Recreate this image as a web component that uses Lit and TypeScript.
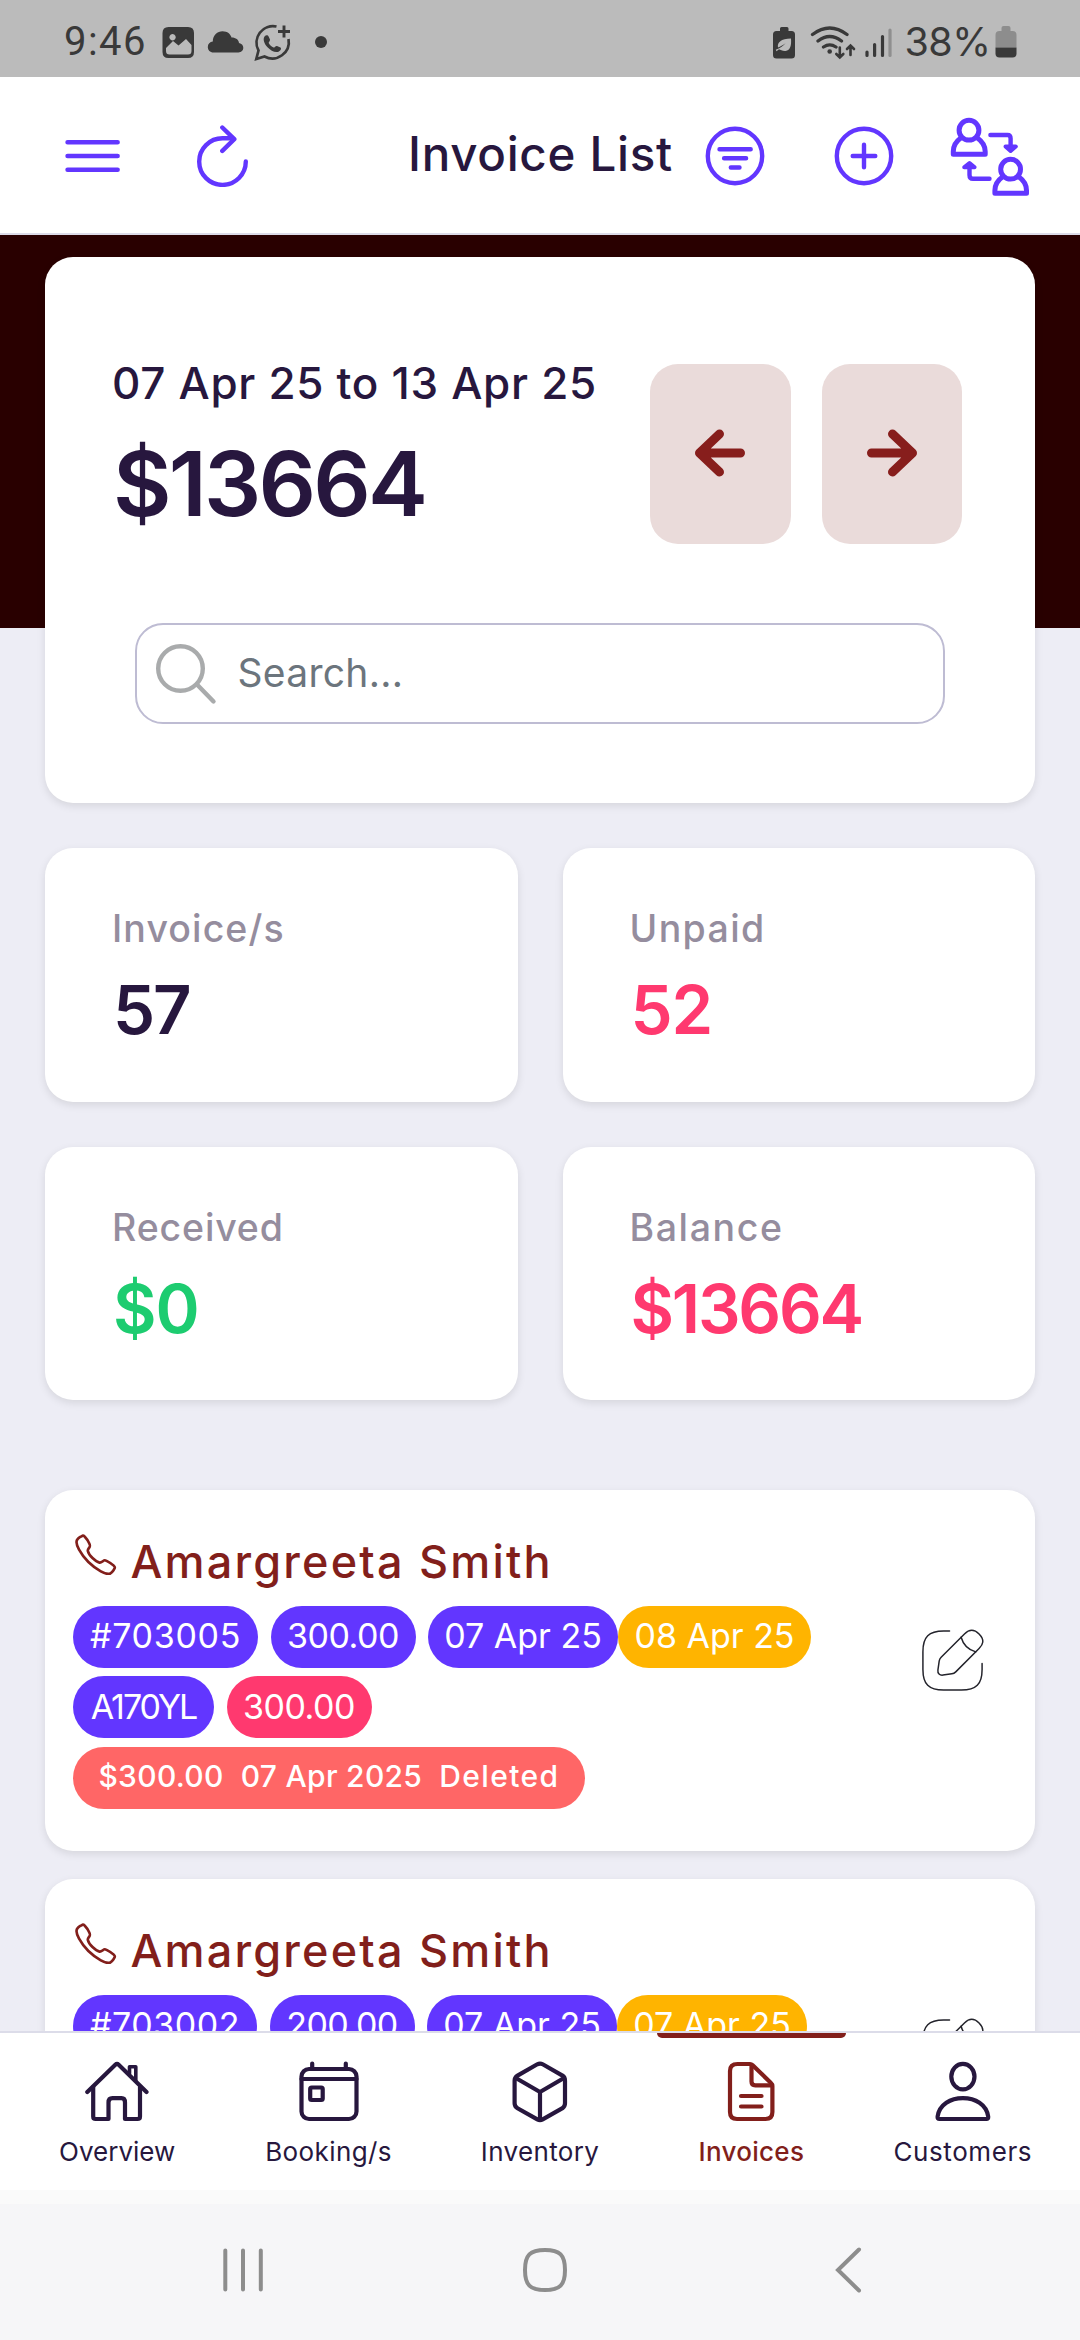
import { LitElement, html, css, svg, TemplateResult } from "lit";
import { customElement, property } from "lit/decorators.js";
import { classMap } from "lit/directives/class-map.js";
import { styleMap } from "lit/directives/style-map.js";

/* ---------- data ---------- */

interface Pill {
  text: string;
  tone: "primary" | "warning" | "danger";
  width: number;
  spacing: number;
  joined?: boolean;
}

interface Invoice {
  customer: string;
  rows: Pill[][];
  removed?: string[];
}

interface Stat {
  label: string;
  value: string;
  tone: "dark" | "danger" | "success";
  labelSpacing: number;
  valueSpacing: number;
}

const STATS: Stat[] = [
  { label: "Invoice/s", value: "57", tone: "dark", labelSpacing: 1.1, valueSpacing: -2.1 },
  { label: "Unpaid", value: "52", tone: "danger", labelSpacing: 1.4, valueSpacing: -1.1 },
  { label: "Received", value: "$0", tone: "success", labelSpacing: 0.85, valueSpacing: -1.1 },
  { label: "Balance", value: "$13664", tone: "danger", labelSpacing: 1.6, valueSpacing: -2.25 },
];

const INVOICES: Invoice[] = [
  {
    customer: "Amargreeta Smith",
    rows: [
      [
        { text: "#703005", tone: "primary", width: 185, spacing: 0.7 },
        { text: "300.00", tone: "primary", width: 145, spacing: -0.5 },
        { text: "07 Apr 25", tone: "primary", width: 190, spacing: 0 },
        { text: "08 Apr 25", tone: "warning", width: 193, spacing: 0, joined: true },
      ],
      [
        { text: "A170YL", tone: "primary", width: 141, spacing: -2 },
        { text: "300.00", tone: "danger", width: 145, spacing: -0.5 },
      ],
    ],
    removed: ["$300.00", "07 Apr 2025", "Deleted"],
  },
  {
    customer: "Amargreeta Smith",
    rows: [
      [
        { text: "#703002", tone: "primary", width: 184, spacing: 0.5 },
        { text: "200.00", tone: "primary", width: 145, spacing: -0.5 },
        { text: "07 Apr 25", tone: "primary", width: 190, spacing: 0 },
        { text: "07 Apr 25", tone: "warning", width: 190, spacing: 0, joined: true },
      ],
    ],
  },
];

/* ---------- icons ---------- */

const menuIcon = html`<svg width="56" height="40" viewBox="65 135.5 56 40" fill="none" stroke="#6236ff" stroke-width="4.6" stroke-linecap="round">
  <path d="M67.6 141.7H117.6M67.6 155.5H117.6M67.6 169.2H117.6" />
</svg>`;

const refreshIcon = html`<svg width="52" height="62" viewBox="197 124.5 52 62" fill="none" stroke="#6236ff" stroke-width="4.4" stroke-linecap="round" stroke-linejoin="round">
  <path d="M245.8 161A23.3 23.3 0 1 1 222.5 137.8H232" />
  <path d="M222.3 127L234.3 138.7L222.3 150.4" />
</svg>`;

const filterIcon = html`<svg width="60" height="60" viewBox="704.5 125.5 60 60" fill="none" stroke="#6236ff" stroke-width="4.4" stroke-linecap="round">
  <circle cx="734.5" cy="155.5" r="27.2" />
  <path d="M719 148.7H750.2M723.6 157.8H745.6M730.3 167H739" />
</svg>`;

const plusIcon = html`<svg width="60" height="60" viewBox="833.7 125.5 60 60" fill="none" stroke="#6236ff" stroke-width="4.4" stroke-linecap="round">
  <circle cx="863.7" cy="155.5" r="27.2" />
  <path d="M852.4 155.5H875M863.7 144.2V166.8" />
</svg>`;

const swapIcon = html`<svg width="80" height="80" viewBox="950 117 80 80" fill="none" stroke="#6236ff" stroke-width="5" stroke-linecap="round" stroke-linejoin="round">
  <circle cx="969" cy="130.2" r="9.9" />
  <path d="M960.8 138C955.8 141.5 953.3 146.5 953.3 151.5V154.3H985.2V151.5C985.2 146.5 982.4 141.5 977.4 138" />
  <circle cx="1010.6" cy="169.2" r="9.9" />
  <path d="M1002.4 177C997.4 180.5 994.9 185.5 994.9 190.5V193.3H1026.5V190.5C1026.5 185.5 1024 180.5 1019 177" />
  <path d="M990.4 135H1007.5Q1010.6 135 1010.6 138.5V149" stroke-width="4.4" />
  <path d="M1005.5 146.5L1010.6 151L1015.8 146.5Z" fill="#6236ff" stroke-width="4" />
  <path d="M989.5 178.8H973Q969.5 178.8 969.5 175V166" stroke-width="4.4" />
  <path d="M964.2 167.3L969.5 163L974.6 167.3Z" fill="#6236ff" stroke-width="4" />
</svg>`;

const arrowIcon = (dir: "left" | "right") => html`<svg width="52" height="50" viewBox="0 0 52 50" fill="none" stroke="#871e1c" stroke-width="9" stroke-linecap="round" stroke-linejoin="round">
  ${dir === "left"
    ? svg`<path d="M25.5 6L5.5 25L25.5 44M5.5 25H46.5" />`
    : svg`<path d="M26.5 6L46.5 25L26.5 44M46.5 25H5.5" />`}
</svg>`;

const searchIcon = html`<svg width="62" height="62" viewBox="155 643 62 62" fill="none" stroke="#a9abac" stroke-width="4.4">
  <circle cx="180.5" cy="668.5" r="22.3" />
  <path d="M197 684.5L213.5 701.5" stroke-linecap="round" />
</svg>`;

const phoneIcon = html`<svg width="41.5" height="41.5" viewBox="31 31 450 450" fill="none" stroke="#821f1b" stroke-width="29" stroke-linejoin="round">
  <path d="M451 374c-15.88-16-54.34-39.35-73-48.76-24.3-12.24-26.3-13.24-45.4.95-12.74 9.47-21.21 17.93-36.12 14.75s-47.31-21.11-75.68-49.39-47.34-61.62-50.53-76.48 5.41-23.23 14.79-36c13.22-18 12.22-21 .92-45.3-8.81-18.9-32.84-57-48.9-72.8C119.9 44 119.9 47 108.83 51.6A160.15 160.15 0 0083 65.37C67 76 58.12 84.83 51.91 98.1s-9 44.38 23.07 102.64 54.57 88.05 101.14 134.49S258.5 406.64 310.85 436c64.76 36.27 89.6 29.2 102.91 23s22.18-15 32.83-31a159.09 159.09 0 0013.8-25.8C465 391.17 468 391.17 451 374z" />
</svg>`;

const editIcon = html`<svg width="71" height="71" viewBox="0 0 24 24" fill="none" stroke="#23232b" stroke-width=".5" stroke-linecap="round" stroke-linejoin="round">
  <path d="M11 2H9C4 2 2 4 2 9v6c0 5 2 7 7 7h6c5 0 7-2 7-7v-2" />
  <path d="M16.04 3.02 8.16 10.9c-.3.3-.6.89-.66 1.32l-.43 3.01c-.16 1.09.61 1.85 1.7 1.7l3.01-.43c.42-.06 1.01-.36 1.32-.66l7.88-7.88c1.36-1.36 2-2.94 0-4.94-2-2-3.58-1.36-4.94 0Z" />
  <path d="M14.91 4.15a7.144 7.144 0 0 0 4.94 4.94" />
</svg>`;

const overviewIcon = svg`
  <path d="M87.3 2092L115.3 2064.8Q117 2063.2 118.7 2064.8L146.5 2092" />
  <path d="M93.2 2087V2116.5Q93.2 2119 95.7 2119H108.5V2102.5Q108.5 2098.2 112.5 2098.2H121.5Q125 2098.2 125 2102.5V2119H137.5Q140 2119 140 2116.5V2087" />
  <path d="M129.5 2073.5V2066.7H135.8V2080.5" stroke-width="3.6" />`;
const bookingIcon = svg`
  <rect x="301.3" y="2069" width="55" height="50" rx="7.5" />
  <path d="M301.3 2079H356.3M312 2063.5V2067M345.6 2063.5V2067" />
  <rect x="310" y="2087.5" width="12.5" height="12.5" rx="1.5" />`;
const inventoryIcon = svg`
  <path d="M537.3 2064.3L517.5 2075.6Q514.6 2077.3 514.6 2080.7V2103.3Q514.6 2106.5 517.5 2108.2L537.3 2119.3Q540 2120.8 542.7 2119.3L562.5 2108.2Q565 2106.5 565 2103.3V2080.7Q565 2077.3 562.5 2075.6L542.7 2064.3Q540 2062.8 537.3 2064.3Z" />
  <path d="M515.8 2078L540 2092L564 2078M540 2092V2120" />`;
const invoicesIcon = svg`
  <path d="M738 2064H750.5Q752 2064 753.2 2065.2L771.5 2083Q772.9 2084.3 772.9 2086V2112Q772.9 2119 766 2119H737.5Q730.5 2119 730.5 2112V2071Q730.5 2064 738 2064Z" />
  <path d="M752 2065V2081.5Q752 2085.3 755.8 2085.3H772.5M741.5 2096H762M741.5 2106.5H762" />`;
const customersIcon = svg`
  <ellipse cx="962.9" cy="2076.6" rx="11.6" ry="12.8" />
  <path d="M939.5 2119Q937.3 2119 937.6 2116.5C939.5 2104.5 950.5 2098.2 962.9 2098.2S986.3 2104.5 988.2 2116.5Q988.5 2119 986.3 2119Z" />`;

const TABS = [
  { label: "Overview", center: 117, spacing: 0, icon: overviewIcon, active: false },
  { label: "Booking/s", center: 328.8, spacing: 0.4, icon: bookingIcon, active: false },
  { label: "Inventory", center: 540, spacing: 0.35, icon: inventoryIcon, active: false },
  { label: "Invoices", center: 751.5, spacing: 0.3, icon: invoicesIcon, active: true },
  { label: "Customers", center: 963, spacing: 0.6, icon: customersIcon, active: false },
];

/* ---------- status bar ---------- */

@customElement("status-bar")
export class StatusBar extends LitElement {
  static styles = css`
    :host { display: block; flex: none; }
    .bar {
      height: 77px; box-sizing: border-box; background: #bbb; color: #393939;
      display: flex; align-items: center; padding: 7px 58.5px 0 64px;
    }
    .time { font: 400 40px/44px Roboto, sans-serif; letter-spacing: 1.45px; width: 98px; }
    .grow { flex: 1; }
    .percent { font: 400 39.5px/44px Inter, sans-serif; letter-spacing: -0.5px; width: 88px; margin-left: 11.5px; text-align: center; }
    svg { display: block; flex: none; }
  `;

  render() {
    return html`<div class="bar">
      <div class="time">9:46</div>
      <svg width="170" height="44" viewBox="162 20 170 44" fill="none" stroke="#393939">
        <path stroke="none" fill="#393939" fill-rule="evenodd" d="M168.500 27H188Q194 27 194 33V52Q194 58 188 58H168.500Q162.500 58 162.500 52V33Q162.500 27 168.500 27ZM166 48L173 41L178.500 45.500L186 39L191.500 45V51Q191.500 54.500 188 54.500H169.500Q166 54.500 166 51ZM172.500 34A3.200 3.200 0 1 0 172.600 34Z" />
        <path stroke="none" fill="#393939" d="M213.500 52.500C210 52.500 207.800 50 207.800 47S210 42 212.800 41.600C212.800 35 217.500 31.200 222.500 31.200C227.500 31.200 230.500 34 231.500 37.600C236 37.600 238.500 40 239 43C242 43.500 243.300 45.500 243.300 47.800C243.300 50.500 241 52.500 238.500 52.500Z" />
        <path d="M276.500 26.500A16.500 16.500 0 0 0 258.500 50.500L256.300 59L264.500 56.500A16.500 16.500 0 0 0 288.500 39" stroke-width="2.700" />
        <path d="M284 25.500V37.500M278 31.500H290" stroke-width="2.900" />
        <path stroke="none" fill="#393939" d="M264.500 36.500C266 34.500 268 35 268.600 36.500L270 39.500C270.300 41 268.500 42 268.700 43C269.800 45.200 271.500 46.700 273.600 47.600C274.700 47.700 275.700 45.600 277 46L280.500 47.600C281.800 48.600 280.500 51 278.500 51.800C275 53 270.500 50.500 267.500 47.300C264.500 44 262.500 39.500 264.500 36.500Z" />
        <circle cx="321" cy="42" r="6" fill="#393939" stroke="none" />
      </svg>
      <div class="grow"></div>
      <svg width="120" height="44" viewBox="771 20 120 44" fill="none" stroke="#393939" stroke-linecap="round">
        <path stroke="none" fill="#393939" d="M779 28.500Q779 27 780.500 27H786Q787.500 27 787.500 28.500V31H790.500Q794 31 794 34.500V55Q794 58.500 790.500 58.500H775.500Q772 58.500 772 55V34.500Q772 31 775.500 31H779Z" />
        <path stroke="none" fill="#bbb" d="M790 38.500C790.500 45 789.500 50.500 784.500 51C781.500 51.200 779.500 50 778 49.300L775.500 51.200L774.800 49.800C779 48 782 46 784.500 43.200C781.500 45.200 779.500 46.500 777 47.500C776 42.500 780 38.500 790 38.500Z" />
        <path d="M811.500 34.500Q828.700 21.500 846 34.500M817 41Q828.700 32 840.500 41M822.500 47Q828.700 42.800 835 47" stroke-width="3.300" />
        <circle cx="828.700" cy="51.500" r="2.300" fill="#393939" stroke="none" />
        <path d="M838.800 47.500V57M835.300 54L838.800 57.500L842.300 54M849.500 55V46M846 49L849.500 45.500L853 49" stroke-width="2.600" />
        <path d="M866 52V55.500M873.600 44.500V55.500M881.500 36.500V55.500" stroke-width="3.200" />
        <path d="M889 30V55.500" stroke="#8f8f8f" stroke-width="3.200" />
      </svg>
      <div class="percent">38%</div>
      <svg width="30" height="44" viewBox="991.5 20 30 44">
        <path fill="#8d8d8d" d="M1001 28Q1001 26 1003 26H1008Q1010 26 1010 28V31H1012Q1016 31 1016 35V47.500H995V35Q995 31 999 31H1001Z" />
        <path fill="#393939" d="M995 47.500H1016V53.500Q1016 57.500 1012 57.500H999Q995 57.500 995 53.500Z" />
      </svg>
    </div>`;
  }
}

/* ---------- top bar ---------- */

@customElement("top-bar")
export class TopBar extends LitElement {
  static styles = css`
    :host { display: block; flex: none; }
    .bar {
      height: 158px; box-sizing: border-box; background: #fff; border-bottom: 2px solid #dcdce9;
      display: flex; align-items: center; padding: 1px 50px 0 65px;
    }
    .title {
      font: 500 47.5px/60px Inter, sans-serif; letter-spacing: 0.7px; color: #27173e;
      width: 296.5px; margin-left: 159px; padding-bottom: 3px; white-space: nowrap;
    }
    .refresh { margin-left: 76px; }
    .plus { margin-left: 69.2px; }
    .swap { margin-left: 56.3px; padding-top: 3px; }
    svg { display: block; }
  `;

  render() {
    return html`<div class="bar">
      <div>${menuIcon}</div>
      <div class="refresh">${refreshIcon}</div>
      <div class="title">Invoice List</div>
      <div>${filterIcon}</div>
      <div class="plus">${plusIcon}</div>
      <div class="swap">${swapIcon}</div>
    </div>`;
  }
}

/* ---------- summary card ---------- */

@customElement("summary-card")
export class SummaryCard extends LitElement {
  static styles = css`
    :host { display: block; }
    .card {
      height: 546px; box-sizing: border-box; background: #fff; border-radius: 28px;
      box-shadow: 0 3px 9px rgba(0, 0, 0, 0.1); padding: 107px 73px 0 67px; font-family: Inter, sans-serif;
    }
    .top { display: flex; height: 180px; color: #27173e; white-space: nowrap; }
    .text { flex: 1; }
    .range { font-size: 44px; font-weight: 500; line-height: 38px; letter-spacing: 0.7px; }
    .amount { font-size: 90px; font-weight: 600; line-height: 96px; letter-spacing: -2.8px; margin: 34px 0 0 1px; }
    .buttons { display: flex; gap: 31px; }
    .step {
      width: 140.5px; height: 180px; border-radius: 28px; background: #eadbda; padding: 0 0 3px;
      display: flex; align-items: center; justify-content: center; box-sizing: border-box;
    }
    .search {
      height: 101px; box-sizing: border-box; margin: 79px 17px 0 23px; border: 2px solid #bebcd3;
      border-radius: 28px; display: flex; align-items: center; padding-left: 18px; gap: 20.5px;
      font-size: 39px; letter-spacing: 0.3px; color: #6c757d;
    }
    .search span { padding-bottom: 2px; }
    svg { display: block; }
  `;

  render() {
    return html`<div class="card">
      <div class="top">
        <div class="text">
          <div class="range">07 Apr 25 to 13 Apr 25</div>
          <div class="amount">$13664</div>
        </div>
        <div class="buttons">
          <div class="step">${arrowIcon("left")}</div>
          <div class="step">${arrowIcon("right")}</div>
        </div>
      </div>
      <div class="search">${searchIcon}<span>Search...</span></div>
    </div>`;
  }
}

/* ---------- stat tile ---------- */

@customElement("stat-card")
export class StatCard extends LitElement {
  @property({ attribute: false }) stat!: Stat;

  static styles = css`
    :host { display: block; }
    .card {
      height: 253.5px; box-sizing: border-box; background: #fff; border-radius: 28px;
      box-shadow: 0 3px 9px rgba(0, 0, 0, 0.1); padding: 54px 0 0 67px; font-family: Inter, sans-serif;
    }
    .label { font-size: 37.5px; font-weight: 500; line-height: 54px; color: #958d9e; }
    .value { font-size: 67px; font-weight: 600; line-height: 60px; margin: 24px 0 0 1px; }
    .dark { color: #27173e; }
    .danger { color: #ff396f; }
    .success { color: #1dcc70; }
  `;

  render() {
    const s = this.stat;
    return html`<div class="card">
      <div class="label" style=${styleMap({ letterSpacing: `${s.labelSpacing}px` })}>${s.label}</div>
      <div class=${classMap({ value: true, [s.tone]: true })} style=${styleMap({ letterSpacing: `${s.valueSpacing}px` })}>${s.value}</div>
    </div>`;
  }
}

/* ---------- invoice card ---------- */

@customElement("invoice-card")
export class InvoiceCard extends LitElement {
  @property({ attribute: false }) invoice!: Invoice;

  static styles = css`
    :host { display: block; }
    .card {
      height: 361px; box-sizing: border-box; background: #fff; border-radius: 28px;
      box-shadow: 0 3px 9px rgba(0, 0, 0, 0.1); padding: 0 47.5px 0 28px;
      display: flex; justify-content: space-between; font-family: Inter, sans-serif; white-space: nowrap;
    }
    .body { padding-top: 40px; }
    .head { display: flex; height: 63px; align-items: center; padding-left: 2px; gap: 14px; margin-bottom: 13px; }
    .phone { padding-bottom: 14px; }
    .name { font-size: 45px; font-weight: 500; line-height: 63px; letter-spacing: 2.2px; color: #821f1b; }
    .row { display: flex; gap: 12.5px; margin-bottom: 8.4px; }
    .pill {
      height: 62px; box-sizing: border-box; border-radius: 31px; padding-bottom: 2.5px; color: #fff;
      display: flex; align-items: center; justify-content: center; font-size: 34px;
    }
    .joined { margin-left: -12.5px; }
    .primary { background: #6236ff; }
    .warning { background: #ffb400; }
    .danger { background: #ff396f; }
    .removed { background: #ff6666; width: 512px; gap: 17px; font-size: 30px; font-weight: 500; letter-spacing: 0.3px; padding-bottom: 3.5px; }
    .removed :last-child { letter-spacing: 1.4px; }
    .edit { padding-top: 135px; }
    svg { display: block; }
  `;

  private renderPill(p: Pill): TemplateResult {
    return html`<div
      class=${classMap({ pill: true, [p.tone]: true, joined: !!p.joined })}
      style=${styleMap({ width: `${p.width}px`, letterSpacing: `${p.spacing}px` })}
    >${p.text}</div>`;
  }

  render() {
    const { customer, rows, removed } = this.invoice;
    return html`<div class="card">
      <div class="body">
        <div class="head">
          <div class="phone">${phoneIcon}</div>
          <div class="name">${customer}</div>
        </div>
        ${rows.map((row) => html`<div class="row">${row.map((p) => this.renderPill(p))}</div>`)}
        ${removed ? html`<div class="pill removed">${removed.map((t) => html`<span>${t}</span>`)}</div>` : null}
      </div>
      <div class="edit">${editIcon}</div>
    </div>`;
  }
}

/* ---------- bottom tabs ---------- */

@customElement("tab-bar")
export class TabBar extends LitElement {
  static styles = css`
    :host { display: block; flex: none; }
    .bar {
      height: 159px; box-sizing: border-box; background: #fff; border-top: 2px solid #dcdce9;
      padding: 0 11.5px; display: grid; grid-template-columns: repeat(5, 1fr);
    }
    .tab {
      position: relative; display: flex; flex-direction: column; align-items: center;
      padding-top: 27px; color: #27173e; font: 400 26px/30px Inter, sans-serif;
    }
    .label { margin-top: 14px; }
    .active { color: #821f1b; font-weight: 500; }
    .active::before {
      content: ""; position: absolute; top: 0; left: 11px; right: 11px; height: 5px;
      background: #821f1b; border-radius: 0 0 5px 5px;
    }
    svg { display: block; }
  `;

  render() {
    return html`<div class="bar">
      ${TABS.map(
        (t) => html`<div class=${classMap({ tab: true, active: t.active })}>
          <svg width="64" height="63" viewBox=${`${t.center - 32} 2060 64 63`} fill="none" stroke="currentColor" stroke-width="4.2" stroke-linecap="round" stroke-linejoin="round">${t.icon}</svg>
          <div class="label" style=${styleMap({ letterSpacing: `${t.spacing}px` })}>${t.label}</div>
        </div>`,
      )}
    </div>`;
  }
}

/* ---------- system navigation ---------- */

@customElement("system-nav")
export class SystemNav extends LitElement {
  static styles = css`
    :host { display: block; flex: 1; }
    .bar {
      height: 150px; box-sizing: border-box; border-top: 14px solid #fafafa; background: #f6f6f8;
      display: flex; align-items: center; padding: 0 0 5px 218px;
    }
    .home { margin-left: 252px; }
    .back { margin-left: 264px; }
    svg { display: block; }
  `;

  render() {
    return html`<div class="bar">
      <svg width="50" height="50" viewBox="218 2245 50 50" stroke="#8d8d8d" stroke-width="4" stroke-linecap="round">
        <path d="M225.3 2250.5V2289.5M243 2250.5V2289.5M260.8 2250.5V2289.5" />
      </svg>
      <svg class="home" width="50" height="50" viewBox="520 2245 50 50" fill="none" stroke="#8d8d8d" stroke-width="4">
        <path d="M545 2250C560 2250 565 2255 565 2270S560 2290 545 2290S525 2285 525 2270S530 2250 545 2250Z" />
      </svg>
      <svg class="back" width="30" height="50" viewBox="834 2245 30 50" fill="none" stroke="#8d8d8d" stroke-width="4" stroke-linecap="round">
        <path d="M859 2249.5L838 2270L859 2290.5" />
      </svg>
    </div>`;
  }
}

/* ---------- page ---------- */

@customElement("app-root")
export class AppRoot extends LitElement {
  static styles = css`
    :host { display: block; }
    .page { width: 1080px; height: 2340px; display: flex; flex-direction: column; overflow: hidden; background: #f6f6f8; }
    .content {
      height: 1796px; flex: none; box-sizing: border-box; overflow: hidden; padding: 22px 45px 0;
      background: linear-gradient(#290000 0 393px, #ededf5 393px);
    }
    .stats { display: grid; grid-template-columns: 1fr 1fr; gap: 45px; margin-top: 45px; }
    .list { display: flex; flex-direction: column; gap: 28px; margin-top: 90px; }
  `;

  render() {
    return html`<div class="page">
      <status-bar></status-bar>
      <top-bar></top-bar>
      <div class="content">
        <summary-card></summary-card>
        <div class="stats">${STATS.map((s) => html`<stat-card .stat=${s}></stat-card>`)}</div>
        <div class="list">${INVOICES.map((i) => html`<invoice-card .invoice=${i}></invoice-card>`)}</div>
      </div>
      <tab-bar></tab-bar>
      <system-nav></system-nav>
    </div>`;
  }
}
